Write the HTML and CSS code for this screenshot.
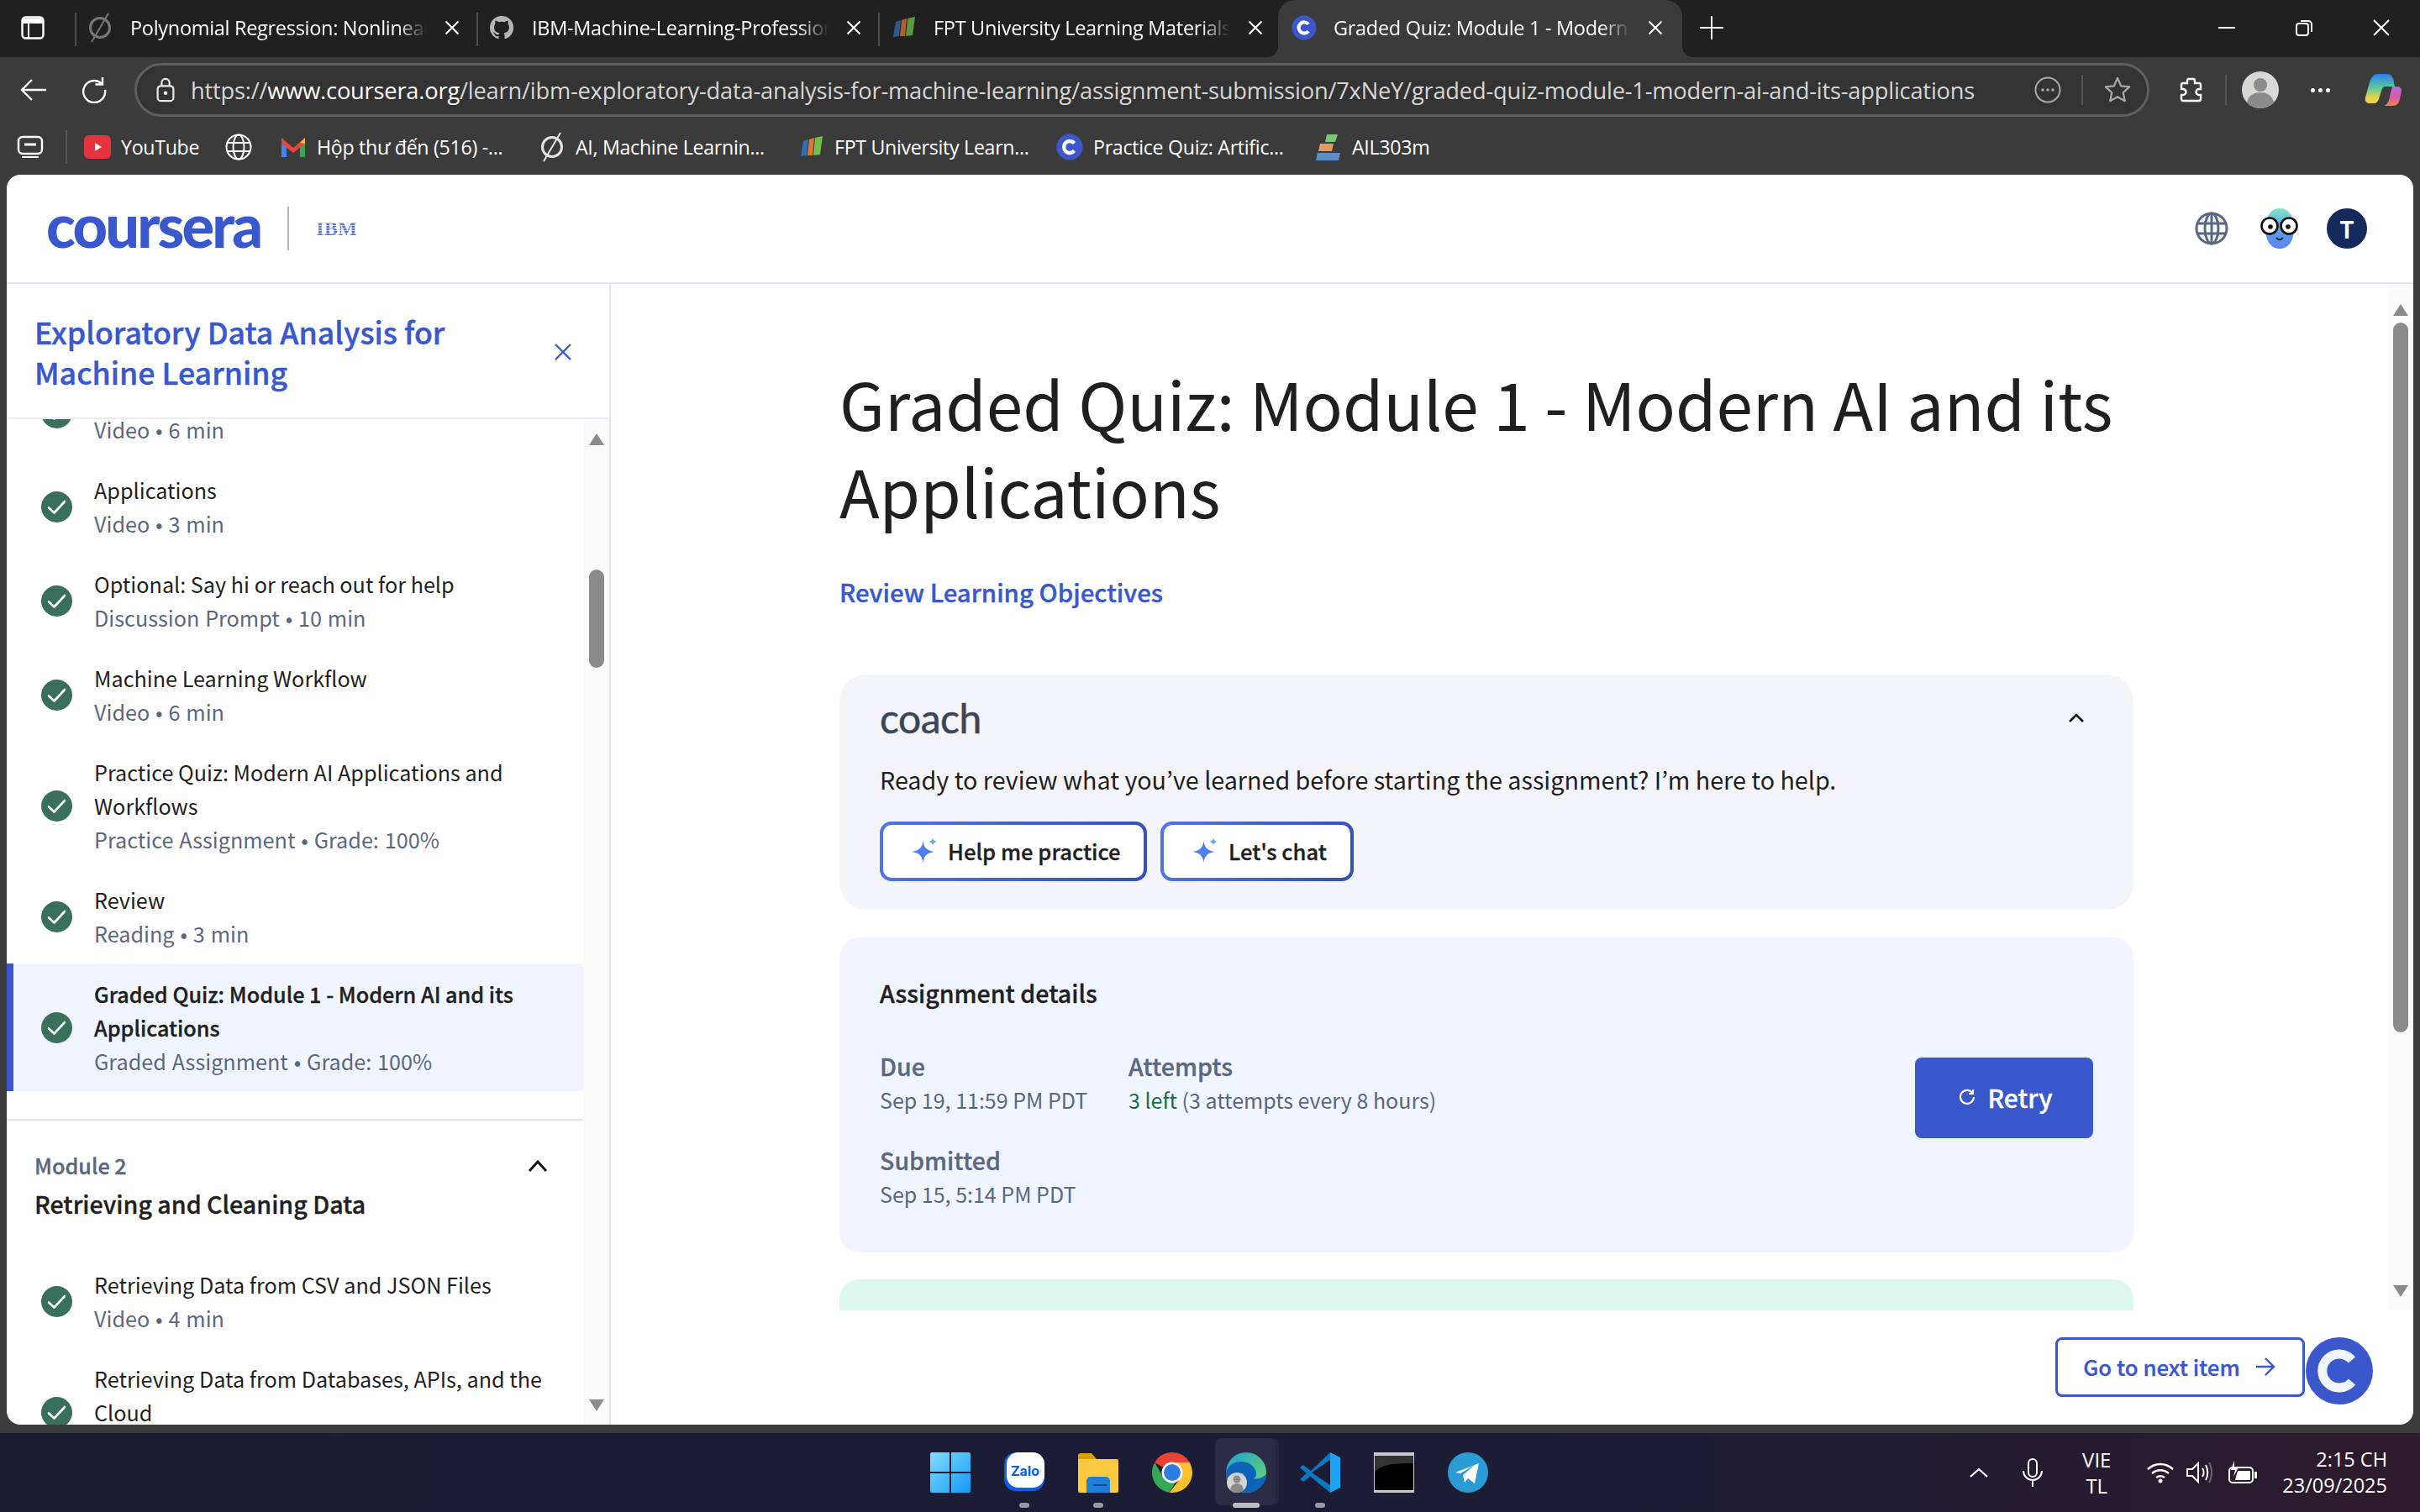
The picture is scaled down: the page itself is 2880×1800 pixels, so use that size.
FILE: index.html
```html
<!DOCTYPE html>
<html lang="en">
<head>
  <meta charset="UTF-8" />
  <title>Graded Quiz: Module 1 - Modern AI and its Applications</title>
  <link rel="stylesheet" href="styles.css">
</head>
<body>

<svg class="defs" width="0" height="0">
  <defs>
    <symbol id="check" viewBox="0 0 37 37">
      <circle cx="18.5" cy="18.5" r="18.5" fill="#38705a"/>
      <path d="M9 19.5l6.5 6L28 12" fill="none" stroke="#fff" stroke-width="2.6" stroke-linecap="round" stroke-linejoin="round"/>
    </symbol>
    <symbol id="cfav" viewBox="0 0 32 32">
      <circle cx="16" cy="16" r="15.5" fill="#3a57cb"/>
      <path d="M21.5 11.5a7 7 0 1 0 0 9" fill="none" stroke="#fff" stroke-width="4.4"/>
    </symbol>
    <symbol id="x" viewBox="0 0 24 24">
      <path d="M3 3l18 18M21 3L3 21" fill="none" stroke="currentColor" stroke-width="2.4"/>
    </symbol>
    <symbol id="slash" viewBox="0 0 32 40">
      <circle cx="16" cy="20" r="11.5" fill="none" stroke="currentColor" stroke-width="3"/>
      <path d="M26 3L6 37" stroke="currentColor" stroke-width="2"/>
    </symbol>
    <symbol id="fpt" viewBox="0 0 32 32">
      <path d="M7 9l6-2-2 19-7 1z" fill="#2f6fb8"/>
      <path d="M14 7l6-2-2 21-6 0z" fill="#e0772f"/>
      <path d="M21 5l9-2-3 22-8 1z" fill="#6fbf4a"/>
    </symbol>
    <symbol id="spark" viewBox="0 0 30 30">
      <path d="M13.500 4c1 8 4.500 11.500 13 13-8.500 1.500-12 5-13 13-1-8-4.500-11.500-13-13 8.500-1.500 12-5 13-13z" fill="#4f7ff0"/>
      <path d="M25 0c.4 3 1.500 4.200 5 5-3.500.8-4.600 2-5 5-.4-3-1.500-4.200-5-5 3.500-.8 4.600-2 5-5z" fill="#63a8ea"/>
    </symbol>
    <linearGradient id="edge1" x1="0" y1="0" x2="1" y2="1">
      <stop offset="0" stop-color="#1c9fd8"/><stop offset="1" stop-color="#6fdc5f"/>
    </linearGradient>
    <linearGradient id="win" x1="0" y1="0" x2="1" y2="1">
      <stop offset="0" stop-color="#86dcff"/><stop offset="1" stop-color="#0f9af5"/>
    </linearGradient>
    <linearGradient id="pilot" x1="0" y1="0" x2="0" y2="1">
      <stop offset="0" stop-color="#2f7df0"/><stop offset=".45" stop-color="#55c9a0"/><stop offset=".8" stop-color="#e8d24a"/>
    </linearGradient>
    <linearGradient id="pilot2" x1="0" y1="0" x2="0" y2="1">
      <stop offset="0" stop-color="#b56ae0"/><stop offset=".6" stop-color="#e05aa0"/><stop offset="1" stop-color="#ee8a3a"/>
    </linearGradient>
    <linearGradient id="pal" x1="0" y1="0" x2="0" y2="1">
      <stop offset="0" stop-color="#7fe3c8"/><stop offset=".5" stop-color="#5aa6ee"/><stop offset="1" stop-color="#5c82ef"/>
    </linearGradient>
  </defs>
</svg>

<div class="tabbar">
  <svg class="tabs-btn" viewBox="0 0 28 28"><rect x="1.500" y="1.500" width="25" height="25" rx="4" fill="none" stroke="#fff" stroke-width="2.400"/><path d="M2 3h24v6H2z" fill="#fff"/><path d="M9 9v17" stroke="#fff" stroke-width="2"/></svg>

  <div class="tab">
    <svg class="fav fav-dim"><use href="#slash"/></svg>
    <span class="tab-title">Polynomial Regression: Nonlinear Regression</span>
    <svg class="tab-x"><use href="#x"/></svg>
  </div>
  <div class="tab">
    <svg class="fav" viewBox="0 0 32 32"><path d="M16 2a14 14 0 0 0-4.400 27.300c.7.100 1-.3 1-.7v-2.500c-3.900.8-4.700-1.800-4.700-1.800-.6-1.600-1.500-2.100-1.500-2.100-1.300-.9.100-.8.100-.8 1.400.1 2.100 1.400 2.100 1.400 1.200 2.100 3.200 1.500 4 1.200.1-.9.500-1.500.9-1.800-3.100-.4-6.400-1.600-6.400-6.900 0-1.500.5-2.800 1.400-3.800-.1-.4-.6-1.800.1-3.700 0 0 1.200-.4 3.900 1.400a13 13 0 0 1 7 0c2.700-1.800 3.900-1.400 3.900-1.400.8 1.900.3 3.300.1 3.700.9 1 1.400 2.300 1.400 3.800 0 5.400-3.300 6.500-6.400 6.900.5.400 1 1.300 1 2.600v3.800c0 .4.300.8 1 .7A14 14 0 0 0 16 2z" fill="#b5b5b5"/></svg>
    <span class="tab-title">IBM-Machine-Learning-Professional-Certificate</span>
    <svg class="tab-x"><use href="#x"/></svg>
  </div>
  <div class="tab tab-third">
    <svg class="fav fav-fpt"><use href="#fpt"/></svg>
    <span class="tab-title">FPT University Learning Materials</span>
    <svg class="tab-x"><use href="#x"/></svg>
  </div>
  <div class="tab tab-active">
    <svg class="fav"><use href="#cfav"/></svg>
    <span class="tab-title">Graded Quiz: Module 1 - Modern AI and its Applications</span>
    <svg class="tab-x"><use href="#x"/></svg>
  </div>
  <svg class="tab-plus" viewBox="0 0 28 28"><path d="M14 0v28M0 14h28" stroke="#fff" stroke-width="2"/></svg>

  <div class="win-controls">
    <svg viewBox="0 0 20 20"><path d="M0 10h20" stroke="#fff" stroke-width="2"/></svg>
    <svg viewBox="0 0 20 20"><rect x="1" y="5" width="14" height="14" rx="3" fill="none" stroke="#fff" stroke-width="2"/><path d="M6 2h9a4 4 0 0 1 4 4v9" fill="none" stroke="#fff" stroke-width="2"/></svg>
    <svg viewBox="0 0 20 20"><path d="M1 1l18 18M19 1L1 19" stroke="#fff" stroke-width="2"/></svg>
  </div>
</div>

<div class="toolbar">
  <svg class="nav-back" viewBox="0 0 32 28"><path d="M14 2L2 14l12 12M2 14h29" fill="none" stroke="#fff" stroke-width="2.400"/></svg>
  <svg class="nav-reload" viewBox="0 0 32 32"><path d="M25 8.500A13 13 0 1 0 29 16" fill="none" stroke="#fff" stroke-width="2.400"/><path d="M26 1v8.500h-8.500" fill="none" stroke="#fff" stroke-width="2.400"/></svg>
  <div class="address">
    <svg class="lock" viewBox="0 0 24 32"><rect x="2" y="11" width="20" height="19" rx="4" fill="none" stroke="#e8e8e8" stroke-width="2.400"/><path d="M7 11V7a5 5 0 0 1 10 0v4" fill="none" stroke="#e8e8e8" stroke-width="2.400"/><circle cx="12" cy="20" r="2.400" fill="#e8e8e8"/></svg>
    <div class="url"><span class="url-dim">https://</span>www.coursera.org<span class="url-dim">/learn/ibm-exploratory-data-analysis-for-machine-learning/assignment-submission/7xNeY/graded-quiz-module-1-modern-ai-and-its-applications</span></div>
    <svg class="addr-more" viewBox="0 0 32 32"><circle cx="16" cy="16" r="14.500" fill="none" stroke="#aaa" stroke-width="2"/><circle cx="10" cy="16" r="1.800" fill="#aaa"/><circle cx="16" cy="16" r="1.800" fill="#aaa"/><circle cx="22" cy="16" r="1.800" fill="#aaa"/></svg>
    <i class="addr-sep"></i>
    <svg class="addr-star" viewBox="0 0 32 32"><path d="M16 2l4.200 9.300 10 1.100-7.500 6.800 2.100 10L16 24.200l-8.800 5 2.100-10-7.500-6.800 10-1.100z" fill="none" stroke="#aaa" stroke-width="2.200" stroke-linejoin="round"/></svg>
  </div>
  <svg class="tool-ext" viewBox="0 0 32 32"><path d="M12 3h6a2 2 0 0 1 2 2v3h5a2 2 0 0 1 2 2v5h-2a3.500 3.500 0 0 0 0 7h2v5a2 2 0 0 1-2 2H6a2 2 0 0 1-2-2v-5h2a3.500 3.500 0 0 0 0-7H4v-5a2 2 0 0 1 2-2h5V5a2 2 0 0 1 1-2z" fill="none" stroke="#fff" stroke-width="2.400"/></svg>
  <i class="tool-sep"></i>
  <svg class="tool-avatar" viewBox="0 0 44 44"><circle cx="22" cy="22" r="22" fill="#d8d8d6"/><circle cx="22" cy="16" r="8" fill="#8b8b8b"/><path d="M6 37c2-9 9-12 16-12s14 3 16 12a22 22 0 0 1-32 0z" fill="#8b8b8b"/></svg>
  <div class="tool-dots"><i></i><i></i><i></i></div>
  <svg class="tool-pilot" viewBox="0 0 44 40"><path d="M24 39h9c5 0 8-3 9-8l2-10c0-3-2-5-5-5h-6l-3 12c-1 5-2 8-6 11z" fill="url(#pilot2)"/><path d="M16 1h11c4 0 6 3 7 6l2 9H25c-3 0-4 2-5 5l-3 10c-1 3-3 5-6 5H6c-4 0-6-3-5-7l5-18C8 5 11 1 16 1z" fill="url(#pilot)"/></svg>
</div>

<div class="bookmarks">
  <svg class="bm-apps" viewBox="0 0 32 28"><rect x="2" y="2" width="28" height="20" rx="5" fill="none" stroke="#fff" stroke-width="2.400"/><path d="M9 11h14" stroke="#fff" stroke-width="3"/><path d="M6 26h20" stroke="#fff" stroke-width="2"/></svg>
  <i class="bm-sep"></i>
  <div class="bm bm-yt"><svg class="bm-ico" viewBox="0 0 32 32"><rect y="2" width="32" height="28" rx="6" fill="#e5343d"/><path d="M13 11l8 5-8 5z" fill="#fff"/></svg><span>YouTube</span></div>
  <svg class="bm-globe" viewBox="0 0 32 32"><g fill="none" stroke="#fff" stroke-width="2"><circle cx="16" cy="16" r="14.500"/><ellipse cx="16" cy="16" rx="6.500" ry="14.500"/><path d="M2 11h28M2 21h28"/></g></svg>
  <div class="bm bm-gmail"><svg class="bm-ico" viewBox="0 0 32 32"><path d="M2 28V7l6 4v17z" fill="#4285f4"/><path d="M30 28V7l-6 4v17z" fill="#34a853"/><path d="M2 5l14 12L30 5v7L16 23 2 12z" fill="#e8453c"/><path d="M24 11l6-6v7z" fill="#f7bb2a"/></svg><span>Hộp thư đến (516) -...</span></div>
  <div class="bm"><svg class="bm-ico bm-slash"><use href="#slash"/></svg><span>AI, Machine Learnin...</span></div>
  <div class="bm"><svg class="bm-ico"><use href="#fpt"/></svg><span>FPT University Learn...</span></div>
  <div class="bm"><svg class="bm-ico"><use href="#cfav"/></svg><span>Practice Quiz: Artific...</span></div>
  <div class="bm"><svg class="bm-ico" viewBox="0 0 32 32"><path d="M14 1h13l-3 9H12z" fill="#7cc47a"/><path d="M6 12h16l-2 9H4z" fill="#e89a5e"/><path d="M3 23h27l-2 9H1z" fill="#5d8ec9"/></svg><span>AIL303m</span></div>
</div>

<div class="page">
  <header class="page-head">
    <span class="logo">coursera</span>
    <i class="logo-sep"></i>
    <span class="logo-ibm">IBM</span>
    <div class="head-right">
      <svg class="head-globe" viewBox="0 0 40 40"><g fill="none" stroke="#5b6780" stroke-width="3"><circle cx="20" cy="20" r="18"/><ellipse cx="20" cy="20" rx="8" ry="18"/><path d="M3 14h34M3 26h34M20 2v36"/></g></svg>
      <svg class="head-pal" viewBox="0 0 48 48"><path d="M24 0c11 0 17 10 17 24S35 48 24 48 7 38 7 24 13 0 24 0z" fill="url(#pal)"/><g fill="#fff" stroke="#111" stroke-width="2.600"><circle cx="12" cy="21" r="9.500"/><circle cx="35" cy="21" r="9.500"/></g><circle cx="13" cy="22" r="2.800" fill="#111"/><circle cx="34" cy="22" r="2.800" fill="#111"/><path d="M20 35c2 3 6 3 8 0" fill="none" stroke="#123" stroke-width="2"/></svg>
      <div class="head-user">T</div>
    </div>
  </header>

  <div class="layout">
    <aside class="sidebar">
      <div class="side-head">
        <h2>Exploratory Data Analysis for Machine Learning</h2>
        <svg class="side-close"><use href="#x"/></svg>
      </div>
      <div class="side-body">
        <div class="side-list">
          <div class="side-scroll">
            <a class="item"><svg class="ok"><use href="#check"/></svg><div><p>Introduction to AI</p><small>Video • 6 min</small></div></a>
            <a class="item"><svg class="ok"><use href="#check"/></svg><div><p>Applications</p><small>Video • 3 min</small></div></a>
            <a class="item"><svg class="ok"><use href="#check"/></svg><div><p>Optional: Say hi or reach out for help</p><small>Discussion Prompt • 10 min</small></div></a>
            <a class="item"><svg class="ok"><use href="#check"/></svg><div><p>Machine Learning Workflow</p><small>Video • 6 min</small></div></a>
            <a class="item"><svg class="ok"><use href="#check"/></svg><div><p>Practice Quiz: Modern AI Applications and Workflows</p><small>Practice Assignment • Grade: 100%</small></div></a>
            <a class="item"><svg class="ok"><use href="#check"/></svg><div><p>Review</p><small>Reading • 3 min</small></div></a>
            <a class="item item-active"><svg class="ok"><use href="#check"/></svg><div><p>Graded Quiz: Module 1 - Modern AI and its Applications</p><small>Graded Assignment • Grade: 100%</small></div></a>
            <div class="module">
              <div>
                <span class="module-no">Module 2</span>
                <h3>Retrieving and Cleaning Data</h3>
              </div>
              <svg class="module-chev" viewBox="0 0 24 16"><path d="M2 14L12 3l10 11" fill="none" stroke="#111" stroke-width="3"/></svg>
            </div>
            <a class="item"><svg class="ok"><use href="#check"/></svg><div><p>Retrieving Data from CSV and JSON Files</p><small>Video • 4 min</small></div></a>
            <a class="item"><svg class="ok"><use href="#check"/></svg><div><p>Retrieving Data from Databases, APIs, and the Cloud</p><small>Video • 5 min</small></div></a>
          </div>
        </div>
        <div class="sbar side-sbar">
          <i class="arr arr-up"></i>
          <i class="thumb"></i>
          <i class="arr arr-down"></i>
        </div>
      </div>
    </aside>

    <main class="main">
      <div class="main-top">
        <div class="main-scroll">
          <div class="content">
            <h1>Graded Quiz: Module 1 - Modern AI and its Applications</h1>
            <a class="objectives">Review Learning Objectives</a>

            <section class="coach">
              <div class="coach-top">
                <span class="coach-logo">coach</span>
                <svg class="coach-chev" viewBox="0 0 20 12"><path d="M2 10l8-8 8 8" fill="none" stroke="#111" stroke-width="2.600"/></svg>
              </div>
              <p class="coach-text">Ready to review what you’ve learned before starting the assignment? I’m here to help.</p>
              <div class="coach-btns">
                <button class="coach-btn btn-practice"><svg><use href="#spark"/></svg>Help me practice</button>
                <button class="coach-btn btn-chat"><svg><use href="#spark"/></svg>Let's chat</button>
              </div>
            </section>

            <section class="details">
              <div class="details-left">
                <h4>Assignment details</h4>
                <div class="facts">
                  <div class="fact"><b>Due</b><span>Sep 19, 11:59 PM PDT</span></div>
                  <div class="fact"><b>Attempts</b><span><em>3 left</em> (3 attempts every 8 hours)</span></div>
                  <div class="fact"><b>Submitted</b><span>Sep 15, 5:14 PM PDT</span></div>
                </div>
              </div>
              <button class="retry"><svg viewBox="0 0 20 20"><path d="M16 4.500A8 8 0 1 0 18 10" fill="none" stroke="#fff" stroke-width="2.200"/><path d="M17 1v5h-5" fill="none" stroke="#fff" stroke-width="2.200"/></svg>Retry</button>
            </section>

            <div class="grade-card"></div>
          </div>
        </div>
        <div class="sbar main-sbar">
          <i class="arr arr-up"></i>
          <i class="thumb"></i>
          <i class="arr arr-down"></i>
        </div>
      </div>
      <footer class="main-foot">
        <button class="next">Go to next item<svg viewBox="0 0 24 22"><path d="M1 11h21M12 1l10 10-10 10" fill="none" stroke="#3a57cb" stroke-width="2.400"/></svg></button>
      </footer>
      <div class="float-c"><svg viewBox="0 0 80 80"><circle cx="40" cy="40" r="40" fill="#3a57cb"/><path d="M55 27a20 20 0 1 0 0 26" fill="none" stroke="#f1f6fd" stroke-width="11"/></svg></div>
    </main>
  </div>
</div>

<div class="taskbar">
  <div class="task-apps">
    <div class="app"><svg viewBox="0 0 48 48"><path d="M0 2a2 2 0 0 1 2-2h21v23H0zM25 0h21a2 2 0 0 1 2 2v21H25zM0 25h23v23H2a2 2 0 0 1-2-2zM25 25h23v21a2 2 0 0 1-2 2H25z" fill="url(#win)"/></svg></div>
    <div class="app app-dot"><svg viewBox="0 0 48 48"><rect width="48" height="46" rx="14" fill="#0b5fe8"/><rect x="3" y="0" width="45" height="42" rx="14" fill="#fff"/><text x="25" y="28" class="zalo">Zalo</text></svg></div>
    <div class="app app-dot"><svg viewBox="0 0 48 48"><path d="M0 4a3 3 0 0 1 3-3h13l6 7H0z" fill="#d9a100"/><path d="M0 8h46a2 2 0 0 1 2 2v36a2 2 0 0 1-2 2H2a2 2 0 0 1-2-2z" fill="#fdc93f"/><path d="M17 34a5 5 0 0 1 5-5h18a5 5 0 0 1 5 5v14H17z" fill="#1f7fd6" transform="translate(-7)"/><path d="M18 39h16" stroke="#0e4f94" stroke-width="2"/></svg></div>
    <div class="app"><svg viewBox="0 0 48 48"><path d="M24 0a24 24 0 0 1 20.800 12H24a12 12 0 0 0-10.400 6L3.200 12A24 24 0 0 1 24 0z" fill="#ea4335"/><path d="M3.200 12l10.400 18A12 12 0 0 0 28 35.300L21 47.800A24 24 0 0 1 3.200 12z" fill="#34a853"/><path d="M44.800 12H24a12 12 0 0 1 10.400 18L21 47.800A24 24 0 0 0 44.800 12z" fill="#fbc02d"/><circle cx="24" cy="24" r="12.500" fill="#fff"/><circle cx="24" cy="24" r="10" fill="#2f7de1"/></svg></div>
    <div class="app app-active"><svg viewBox="0 0 48 48"><circle cx="24" cy="24" r="24" fill="url(#edge1)"/><path d="M0 24c2-9 10-13 18-13 9 0 18 6 18 15 0 2-1 4-3 5 6 1 11-1 15-5 0 8-8 22-24 22-7 0-10-4-10-11 0-6 4-10 8-11-8-3-18 0-22 7z" fill="#0c63b8"/><circle cx="13" cy="36" r="12" fill="#d3d3d1"/><circle cx="13" cy="32" r="4.500" fill="#8b8b8b"/><path d="M5 45c1-6 4-8 8-8s7 2 8 8a12 12 0 0 1-16 0z" fill="#8b8b8b"/></svg></div>
    <div class="app app-dot"><svg viewBox="0 0 48 48"><path d="M36 0l12 6v36l-12 6z" fill="#1fa2f1"/><path d="M36 0L13 22 4 15 0 18l9 8L36 48v-9L14 24 36 9z" fill="#0a78c2"/><path d="M0 32l4 3 10-8-4-4z" fill="#0a78c2"/></svg></div>
    <div class="app"><svg viewBox="0 0 48 48"><rect width="48" height="48" fill="#c9c9c9"/><rect x="1" y="4" width="46" height="41" fill="#000"/><path d="M1 24c6-9 20-11 46-11V4H1z" fill="#333"/></svg></div>
    <div class="app"><svg viewBox="0 0 48 48"><circle cx="24" cy="24" r="24" fill="#2b9bd6"/><path d="M9 24l28-11-5 24-8-6-4 5-2-9 14-12-17 10z" fill="#fff"/></svg></div>
  </div>
  <div class="tray">
    <svg class="tray-chev" viewBox="0 0 22 12"><path d="M1 11l10-9 10 9" fill="none" stroke="#fff" stroke-width="2.200"/></svg>
    <svg class="tray-mic" viewBox="0 0 24 34"><rect x="7" y="1" width="10" height="21" rx="5" fill="none" stroke="#fff" stroke-width="2"/><path d="M1 15a11 11 0 0 0 22 0M12 26v8" fill="none" stroke="#fff" stroke-width="2"/></svg>
    <div class="tray-lang">VIE<br>TL</div>
    <svg class="tray-wifi" viewBox="0 0 32 26"><g fill="none" stroke="#fff" stroke-width="2.400"><path d="M1 9c9-8 21-8 30 0M6 14c6-5 14-5 20 0M11 19c3-2 7-2 10 0"/></g><circle cx="16" cy="23" r="2.500" fill="#fff"/></svg>
    <svg class="tray-vol" viewBox="0 0 32 28"><path d="M1 10h6l7-7v22l-7-7H1z" fill="none" stroke="#fff" stroke-width="2"/><path d="M19 9c2 3 2 7 0 10M23 5c3 5 3 13 0 18" fill="none" stroke="#fff" stroke-width="2"/><path d="M27 2c4 7 4 17 0 24" fill="none" stroke="#666" stroke-width="2"/></svg>
    <svg class="tray-bat" viewBox="0 0 34 28"><rect x="1" y="8" width="28" height="18" rx="4" fill="none" stroke="#fff" stroke-width="2"/><path d="M8 23l3-11h15v11z" fill="#fff"/><path d="M31 13h3v8h-3z" fill="#fff"/><path d="M7 0L3 11h5l-2 8 6-11H7z" fill="#fff"/></svg>
    <div class="tray-clock">2:15 CH<br>23/09/2025</div>
  </div>
</div>

</body>
</html>
```

FILE: styles.css
```css
* { box-sizing: border-box; }
html, body { margin: 0; height: 100%; }
body {
  width: 2880px; height: 1800px; overflow: hidden;
  display: flex; flex-direction: column;
  background: #3b3b3b; color: #fff;
  font-family: "Open Sans", "Noto Sans", sans-serif;
}
.defs { position: absolute; }
i { display: block; font-style: normal; }
button { font: inherit; cursor: pointer; }

/* browser tabs */
.tabbar { height: 68px; background: #202020; display: flex; align-items: center; flex: none; padding-bottom: 2px; }
.tabs-btn { width: 28px; height: 28px; margin-left: 25px; margin-right: 36px; flex: none; }
.tab {
  width: 478px; height: 68px; padding: 0 0 2px 14px; flex: none; align-self: flex-start;
  display: flex; align-items: center; position: relative;
  font-size: 23.5px; letter-spacing: -0.3px;
}
.tab::before {
  content: ""; position: absolute; left: 0; top: 15px;
  width: 2px; height: 40px; background: #4e4e4e;
}
.fav { width: 32px; height: 40px; flex: none; margin-right: 20px; }
.fav-dim { color: #777; }
.fav-fpt { height: 32px; opacity: .75; }
.tab-title {
  width: 353px; white-space: nowrap; overflow: hidden; flex: none;
  -webkit-mask-image: linear-gradient(to right, #000 90%, transparent);
  mask-image: linear-gradient(to right, #000 90%, transparent);
}
.tab-x { width: 20px; height: 20px; flex: none; margin-left: 20px; color: #fff; }
.tab-third { width: 476px; }
.tab-active { width: 481px; background: #3b3b3b; border-radius: 20px 20px 0 0; padding-left: 16px; }
.tab-active .fav { width: 30px; height: 32px; }
/* little curves where the open tab meets the toolbar */
.tab-active::before, .tab-active::after {
  content: ""; position: absolute; top: auto; bottom: 0; width: 12px; height: 12px;
}
.tab-active::before { left: -12px; background: radial-gradient(circle at 0 0, #202020 11.5px, #3b3b3b 12px); }
.tab-active::after { right: -12px; background: radial-gradient(circle at 100% 0, #202020 11.5px, #3b3b3b 12px); }
.tab-plus { width: 28px; height: 28px; margin-left: 21px; flex: none; }
.win-controls { margin-left: auto; padding-right: 36px; display: flex; gap: 72px; align-items: center; }
.win-controls svg { width: 20px; height: 20px; }

/* address bar */
.toolbar { height: 72px; display: flex; align-items: center; flex: none; position: relative; padding-top: 6px; }
.nav-back { width: 32px; height: 28px; margin-left: 24px; flex: none; }
.nav-reload { width: 32px; height: 32px; margin-left: 40px; flex: none; }
.address {
  width: 2398px; height: 64px; margin-left: 32px; flex: none;
  border: 3px solid #5e5e5e; border-radius: 32px; background: #333;
  display: flex; align-items: center; padding-left: 22px;
}
.lock { width: 24px; height: 30px; flex: none; }
.url { margin-left: 18px; font-size: 27.25px; letter-spacing: -0.2px; white-space: nowrap; width: 2123px; flex: none; color: #fff; }
.url-dim { color: #d6d6d6; }
.addr-more { width: 32px; height: 32px; margin-left: 71px; flex: none; }
.addr-sep { width: 2px; height: 36px; background: #555; margin-left: 24px; }
.addr-star { width: 32px; height: 32px; margin-left: 25px; flex: none; }
.tool-ext { width: 32px; height: 34px; margin-left: 34px; flex: none; }
.tool-sep { width: 2px; height: 36px; background: #555; margin-left: 24px; }
.tool-avatar { width: 44px; height: 44px; margin-left: 18px; flex: none; }
.tool-dots { display: flex; gap: 4px; margin-left: 38px; }
.tool-dots i { width: 5px; height: 5px; border-radius: 50%; background: #fff; }
.tool-pilot { width: 44px; height: 40px; margin-left: 41px; flex: none; }

/* bookmarks */
.bookmarks { height: 68px; display: flex; align-items: center; flex: none; font-size: 23.2px; letter-spacing: -0.3px; padding-top: 1px; }
.bm-apps { width: 32px; height: 28px; margin-left: 20px; flex: none; }
.bm-sep { width: 2px; height: 40px; background: #555; margin-left: 26px; }
.bm { display: flex; align-items: center; gap: 12px; white-space: nowrap; width: 308px; flex: none; }
.bm-yt { width: 136px; margin-left: 20px; }
.bm-ico { width: 32px; height: 32px; flex: none; }
.bm-slash { height: 40px; color: #e4e4e4; }
.bm-globe { width: 32px; height: 32px; margin-left: 32px; flex: none; }
.bm-gmail { margin-left: 33px; }

/* page card */
.page {
  width: 2864px; height: 1488px; margin-left: 8px; flex: none;
  background: #fff; color: #1f1f1f; border-radius: 16px;
  display: flex; flex-direction: column; overflow: hidden;
  font-family: "Noto Sans CJK KR", "Noto Sans", sans-serif;
}
.page-head {
  height: 130px; flex: none; border-bottom: 2px solid #e1e5ef;
  display: flex; align-items: center; padding-left: 47px; padding-right: 55px;
}
.logo {
  font-family: "Lato", sans-serif; font-weight: 900; font-size: 72px; margin-bottom: 10px;
  color: #3858cb; letter-spacing: -2.8px; line-height: 1;
}
.logo-sep { width: 2px; height: 52px; background: #a9b5d0; margin-left: 32px; }
.logo-ibm {
  font-family: "Liberation Serif", serif; font-weight: 700; font-size: 24px; line-height: 1;
  margin-left: 32px; letter-spacing: 0.3px;
  background: repeating-linear-gradient(to bottom, #5a73d8 0 2px, #c0caf0 2px 3px);
  -webkit-background-clip: text; background-clip: text; color: transparent;
}
.head-right { margin-left: auto; display: flex; align-items: center; }
.head-globe { width: 40px; height: 40px; }
.head-pal { width: 48px; height: 48px; margin-left: 37px; }
.head-user {
  width: 48px; height: 48px; margin-left: 32px; border-radius: 50%;
  background: #142a5c; color: #fff; font-size: 28px; font-weight: 700;
  display: flex; align-items: center; justify-content: center;
}

.layout { flex: 1; display: flex; min-height: 0; }

/* left column */
.sidebar { width: 719px; flex: none; display: flex; flex-direction: column; border-right: 2px solid #e1e5ef; }
.side-head {
  height: 161px; flex: none; border-bottom: 2px solid #e8ecf5;
  display: flex; align-items: center; padding-left: 33px; padding-right: 43px; padding-top: 2px;
}
.side-head h2 { margin: 0; width: 540px; font-size: 35.7px; line-height: 48px; font-weight: 500; color: #3858cb; -webkit-text-stroke: .4px #3858cb; }
.side-close { width: 24px; height: 24px; margin-left: auto; color: #3858cb; }
.side-body { flex: 1; display: flex; min-height: 0; }
.side-list { flex: 1; overflow: hidden; }
.side-scroll { margin-top: -64px; }
.item { display: flex; align-items: center; padding: 16px 40px 16px 41px; gap: 26px; }
.item p { margin: 0; font-size: 25.2px; line-height: 40px; color: #1f1f1f; }
.item small { display: block; font-size: 25.2px; line-height: 40px; color: #5b6780; word-spacing: 1.2px; }
.ok { width: 37px; height: 37px; flex: none; }
.item-active { background: #f0f5ff; border-left: 8px solid #3858cb; padding-left: 33px; }
.item-active p { font-weight: 500; -webkit-text-stroke: .35px #1f1f1f; }
.module {
  margin-top: 33px; border-top: 2px solid #e1e5f0; padding: 33px 40px 36px 33px;
  display: flex; justify-content: space-between; align-items: flex-start;
}
.module-no { display: block; font-size: 25.2px; line-height: 40px; font-weight: 500; color: #5b6780; -webkit-text-stroke: .35px #5b6780; }
.module h3 { margin: 2px 0 0; font-size: 28.6px; line-height: 48px; font-weight: 500; color: #1f1f1f; -webkit-text-stroke: .35px #1f1f1f; }
.module-chev { width: 24px; height: 16px; margin-top: 13px; margin-right: 2px; }

/* scrollbars */
.sbar { width: 31px; flex: none; background: #fafafa; display: flex; flex-direction: column; align-items: center; }
.arr { width: 0; height: 0; border-left: 9px solid transparent; border-right: 9px solid transparent; }
.arr-up { border-bottom: 14px solid #8b8b8b; }
.arr-down { border-top: 14px solid #8b8b8b; margin-top: auto; }
.thumb { width: 18px; border-radius: 9px; background: #8b8b8b; }
.side-sbar { padding-top: 17px; padding-bottom: 16px; }
.side-sbar .thumb { height: 117px; margin-top: 148px; }
.main-sbar { padding-top: 24px; padding-bottom: 16px; width: 30px; }
.main-sbar .thumb { height: 845px; margin-top: 8px; }

/* main column */
.main { flex: 1; display: flex; flex-direction: column; min-width: 0; position: relative; }
.main-top { height: 1222px; flex: none; display: flex; }
.main-scroll { flex: 1; overflow: hidden; padding-left: 272px; }
.content { width: 1540px; }
h1 { margin: 0; padding-top: 89px; font-size: 78.3px; line-height: 104px; font-weight: 400; color: #1f1f1f; }
.objectives { display: block; margin-top: 45px; font-size: 29.4px; line-height: 48px; font-weight: 500; color: #3858cb; -webkit-text-stroke: .35px #3858cb; }

.coach { margin-top: 75px; height: 280px; background: #f3f5fb; border-radius: 32px; padding: 32px 48px 0; }
.coach-top { display: flex; align-items: center; justify-content: space-between; height: 40px; padding-right: 10px; }
.coach-logo { font-family: "Lato", sans-serif; font-size: 48px; line-height: 40px; color: #3c4559; letter-spacing: -0.5px; -webkit-text-stroke: .5px #3c4559; }
.coach-chev { width: 20px; height: 12px; }
.coach-text { margin: 29px 0 0; font-size: 28.7px; line-height: 48px; color: #1f1f1f; }
.coach-btns { display: flex; gap: 16px; margin-top: 26px; }
.coach-btn {
  height: 71px; padding: 0 0 2px 34px; border: 4px solid transparent; border-radius: 14px;
  background: linear-gradient(#fff, #fff) padding-box, linear-gradient(100deg, #4f74e4, #3550b8) border-box;
  display: flex; align-items: center; gap: 13px;
  font-family: inherit; font-size: 25.6px; font-weight: 500; color: #1f1f1f; -webkit-text-stroke: .35px #1f1f1f;
}
.btn-practice { width: 318px; }
.btn-chat { width: 230px; }
.coach-btn svg { width: 30px; height: 30px; margin-top: -1px; }

.details {
  margin-top: 33px; height: 375px; background: #f0f5ff; border-radius: 24px;
  padding: 42px 48px 0; display: flex; justify-content: space-between; align-items: flex-start;
}
.details h4 { margin: 0; font-size: 28.6px; line-height: 48px; font-weight: 500; color: #1f1f1f; -webkit-text-stroke: .35px #1f1f1f; }
.facts { margin-top: 43px; display: grid; grid-template-columns: 296px auto; row-gap: 32px; }
.fact b { display: block; font-size: 28.6px; line-height: 40px; font-weight: 500; color: #5b6780; -webkit-text-stroke: .3px #5b6780; }
.fact span { display: block; font-size: 25px; line-height: 40px; color: #5b6780; }
.fact em { font-style: normal; color: #1d6b45; }
.retry {
  width: 212px; height: 96px; margin-top: 101px; border: 0; border-radius: 8px; padding: 0 0 2px 4px;
  background: #3a57cb; color: #fff; font-family: inherit; font-size: 30px; font-weight: 500; -webkit-text-stroke: .35px #fff;
  display: flex; align-items: center; justify-content: center; gap: 14px;
}
.retry svg { width: 20px; height: 20px; }

.grade-card { margin-top: 32px; height: 60px; background: #dcf7ee; border-radius: 24px 24px 0 0; }

.main-foot { flex: 1; display: flex; justify-content: flex-end; align-items: flex-start; padding-top: 32px; padding-right: 129px; }
.next {
  width: 297px; height: 71px; border: 3px solid #3a57cb; border-radius: 8px; background: #fff; padding: 0 2px 2px 0;
  display: flex; align-items: center; justify-content: center; gap: 18px;
  font-family: inherit; font-size: 25.8px; font-weight: 500; color: #3a57cb; -webkit-text-stroke: .3px #3a57cb;
}
.next svg { width: 24px; height: 22px; }
.float-c { position: absolute; right: 48px; bottom: 24px; width: 80px; height: 80px; }
.float-c svg { width: 80px; height: 80px; display: block; }

/* windows taskbar */
.taskbar {
  margin-top: 10px; height: 94px; flex: 1;
  background: linear-gradient(90deg, #1b1e33 0%, #1b1d36 55%, #211c33 80%, #2d1b2c 100%);
  display: flex; align-items: center; position: relative;
}
.task-apps { display: flex; margin-left: 1087px; height: 100%; align-items: center; }
.app { width: 88px; height: 100%; display: flex; align-items: center; justify-content: center; position: relative; }
.app svg { width: 48px; height: 48px; }
.app-dot::after {
  content: ""; position: absolute; left: 38px; bottom: 5px;
  width: 12px; height: 6px; border-radius: 3px; background: #9a9aa3;
}
.app-active::before {
  content: ""; position: absolute; left: 7px; top: 6px; bottom: 8px; width: 72px;
  background: #2c2c46; border-radius: 8px; box-shadow: 4px 0 0 #25253c;
}
.app-active svg { position: relative; }
.app-active::after {
  content: ""; position: absolute; left: 28px; bottom: 5px;
  width: 32px; height: 6px; border-radius: 3px; background: #bdbdc2;
}
.zalo { font-family: "Roboto", sans-serif; font-size: 17px; font-weight: 700; fill: #0b5fe8; text-anchor: middle; }

.tray { margin-left: auto; padding-right: 39px; display: flex; align-items: center; color: #fff; }
.tray-chev { width: 22px; height: 12px; }
.tray-mic { width: 24px; height: 34px; margin-left: 41px; }
.tray-lang { width: 60px; margin-left: 34px; text-align: center; font-size: 24px; line-height: 31px; }
.tray-wifi { width: 32px; height: 26px; margin-left: 30px; }
.tray-vol { width: 32px; height: 28px; margin-left: 15px; }
.tray-bat { width: 34px; height: 28px; margin-left: 18px; }
.tray-clock { margin-left: 30px; text-align: right; font-size: 23.5px; line-height: 31px; }
```
